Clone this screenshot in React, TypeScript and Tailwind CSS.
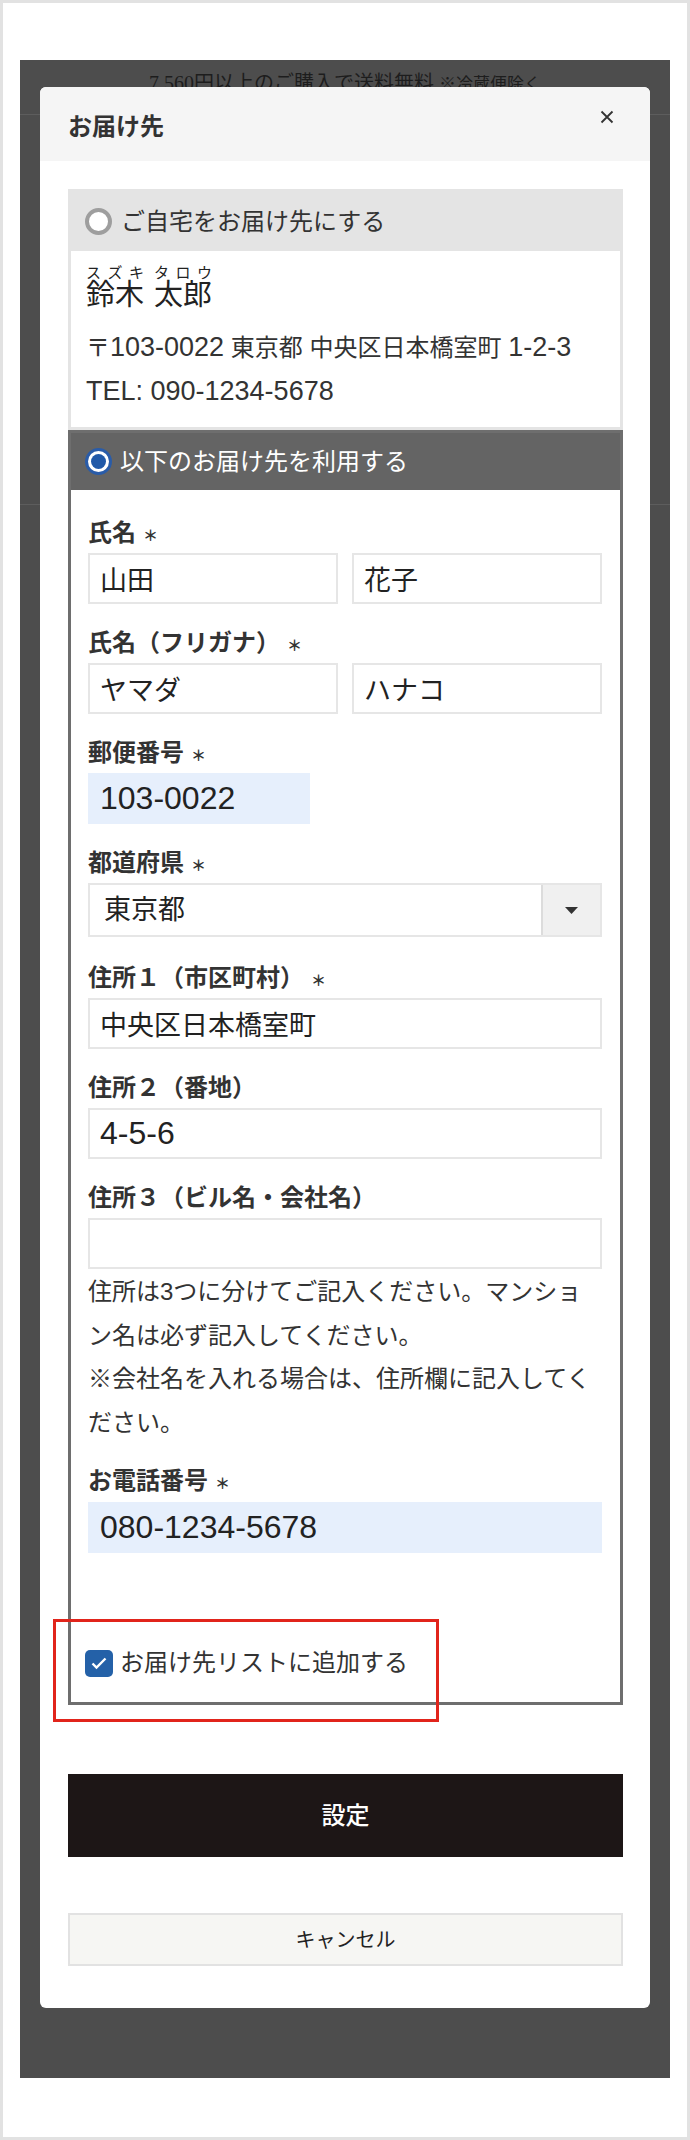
import type { ReactNode } from "react";

const FieldLabel = ({ children, required }: { children: ReactNode; required?: boolean }) => (
  <div className="h-[34px] text-[24px] leading-[34px] font-bold text-[#333]">
    {children}
    {required && <span className="ml-[7px] text-[15px]">＊</span>}
  </div>
);

const TextField = ({
  value = "",
  filled,
  digits,
}: {
  value?: string;
  filled?: boolean;
  digits?: boolean;
}) => (
  <input
    readOnly
    defaultValue={value}
    className={`block h-[51px] w-full border-2 px-[10px] text-[#222] outline-none ${
      filled ? "border-[#e6effc] bg-[#e6effc]" : "border-[#e6e6e6] bg-white"
    } ${digits ? "text-[32px]" : "text-[27px]"}`}
  />
);

const NameWord = ({ ruby, base }: { ruby: string; base: string }) => (
  <div className="flex flex-col">
    <div className="flex justify-between text-[15px] leading-[15px]">
      {ruby.split("").map((c, i) => (
        <span key={i}>{c}</span>
      ))}
    </div>
    <span className="text-[29px] leading-[30px]">{base}</span>
  </div>
);

const Latin = ({ children }: { children: ReactNode }) => (
  <span className="text-[27px] leading-[30px]">{children}</span>
);

export default function App() {
  return (
    <div className="h-[2140px] w-[690px] border-[3px] border-[#e2e2e2] bg-white px-[17px] pt-[57px] font-['Liberation_Sans','Noto_Sans_CJK_JP',sans-serif] text-[#333]">
      <div className="relative h-[2018px] bg-[#4d4d4d] px-[20px] pt-[27px]">
        {/* dimmed page behind the dialog */}
        <div className="absolute inset-x-0 top-0">
          <p className="pt-[11px] text-center leading-[24px] text-[#1d1d1d] font-['Liberation_Serif','Noto_Sans_CJK_JP',serif]">
            <span className="text-[20px]">7,560円以上のご購入で送料無料</span>
            <span className="ml-[5px] text-[17px]">※冷蔵便除く</span>
          </p>
          <div className="mt-[17px] h-px bg-[#5d5d5d]" />
          <div className="mt-[389px] h-px bg-[#5d5d5d]" />
        </div>

        <div className="relative rounded-[6px] bg-white">
          <div className="relative h-[74px] rounded-t-[6px] bg-[#f5f5f5] pl-[28px] pt-[25px]">
            <h2 className="text-[24px] leading-[30px] font-bold text-[#333]">お届け先</h2>
            <button type="button" className="absolute right-[36px] top-[23px]">
              <svg width="14" height="14" viewBox="0 0 14 14" className="block">
                <path d="M1.5 1.5l11 11M12.5 1.5l-11 11" stroke="#333" strokeWidth="1.8" />
              </svg>
            </button>
          </div>

          <div className="pb-[42px] pl-[28px] pr-[27px] pt-[28px]">
            {/* home address */}
            <div className="border-[3px] border-[#e4e4e4]">
              <div className="flex h-[59px] items-center gap-[9px] bg-[#e4e4e4] pl-[14px]">
                <span className="h-[27px] w-[27px] rounded-full border-[4px] border-[#9e9e9e] bg-white" />
                <span className="text-[24px] leading-[30px]">ご自宅をお届け先にする</span>
              </div>
              <div className="bg-white pb-[13px] pl-[15px] pt-[14px] text-[#222]">
                <div className="flex items-end gap-[10px]">
                  <NameWord ruby="スズキ" base="鈴木" />
                  <NameWord ruby="タロウ" base="太郎" />
                </div>
                <div className="mt-[16px] text-[24px] leading-[44px] text-[#333]">
                  <p className="h-[44px]">
                    〒<Latin>103-0022</Latin> 東京都 中央区日本橋室町 <Latin>1-2-3</Latin>
                  </p>
                  <p className="h-[44px]">
                    <Latin>TEL: 090-1234-5678</Latin>
                  </p>
                </div>
              </div>
            </div>

            {/* other address */}
            <div className="border-[3px] border-[#6e6e6e]">
              <div className="flex h-[57px] items-center gap-[8px] bg-[#646464] pl-[14px]">
                <span className="flex h-[27px] w-[27px] items-center justify-center rounded-full border-[3px] border-[#2a5ca8] bg-white">
                  <span className="h-[15px] w-[15px] rounded-full bg-[#2159a8]" />
                </span>
                <span className="text-[24px] leading-[30px] text-white">以下のお届け先を利用する</span>
              </div>

              <div className="bg-white pb-[19px] pl-[17px] pr-[18px] pt-[26px]">
                <FieldLabel required>氏名</FieldLabel>
                <div className="mt-[3px] grid grid-cols-2 gap-[14px]">
                  <TextField value="山田" />
                  <TextField value="花子" />
                </div>

                <div className="mt-[22px]">
                  <FieldLabel required>氏名（フリガナ）</FieldLabel>
                  <div className="mt-[3px] grid grid-cols-2 gap-[14px]">
                    <TextField value="ヤマダ" />
                    <TextField value="ハナコ" />
                  </div>
                </div>

                <div className="mt-[22px]">
                  <FieldLabel required>郵便番号</FieldLabel>
                  <div className="mt-[3px] w-[222px]">
                    <TextField value="103-0022" filled digits />
                  </div>
                </div>

                <div className="mt-[22px]">
                  <FieldLabel required>都道府県</FieldLabel>
                  <div className="mt-[3px] flex h-[54px] border-2 border-[#e6e6e6] bg-white">
                    <span className="flex-1 pl-[14px] text-[27px] leading-[50px] text-[#222]">東京都</span>
                    <span className="flex w-[59px] items-center justify-center border-l-2 border-[#dcdcdc] bg-[#f0f0f0]">
                      <svg width="13" height="7" viewBox="0 0 13 7" className="block">
                        <path d="M0 0h13L6.5 7z" fill="#333" />
                      </svg>
                    </span>
                  </div>
                </div>

                <div className="mt-[24px]">
                  <FieldLabel required>住所１（市区町村）</FieldLabel>
                  <div className="mt-[3px]">
                    <TextField value="中央区日本橋室町" />
                  </div>
                </div>

                <div className="mt-[22px]">
                  <FieldLabel>住所２（番地）</FieldLabel>
                  <div className="mt-[3px]">
                    <TextField value="4-5-6" digits />
                  </div>
                </div>

                <div className="mt-[22px]">
                  <FieldLabel>住所３（ビル名・会社名）</FieldLabel>
                  <div className="mt-[3px]">
                    <TextField />
                  </div>
                </div>

                <div className="mt-[1px] text-[24px] leading-[43.5px] text-[#333]">
                  <p>住所は3つに分けてご記入ください。マンション名は必ず記入してください。</p>
                  <p>※会社名を入れる場合は、住所欄に記入してください。</p>
                </div>

                <div className="mt-[20px]">
                  <FieldLabel required>お電話番号</FieldLabel>
                  <div className="mt-[4px]">
                    <TextField value="080-1234-5678" filled digits />
                  </div>
                </div>

                <div className="relative -ml-[3px] mt-[90px] flex h-[40px] items-center gap-[7px]">
                  <span className="flex h-[27px] w-[28px] items-center justify-center rounded-[5px] bg-[#2461a8]">
                    <svg width="18" height="14" viewBox="0 0 18 14" className="block">
                      <path d="M2.5 7.5l4 4L15.5 2.5" fill="none" stroke="#fff" strokeWidth="2.4" />
                    </svg>
                  </span>
                  <span className="text-[24px] leading-[30px]">お届け先リストに追加する</span>
                  <span className="pointer-events-none absolute left-[-32px] top-[-24px] h-[103px] w-[386px] border-[3px] border-[#e1241b]" />
                </div>
              </div>
            </div>

            <button
              type="button"
              className="mt-[69px] block h-[83px] w-full bg-[#1d1616] text-[24px] font-medium text-white"
            >
              設定
            </button>
            <button
              type="button"
              className="mt-[56px] block h-[53px] w-full border-2 border-[#e2e2e2] bg-[#f6f6f3] text-[20px] text-[#222]"
            >
              キャンセル
            </button>
          </div>
        </div>
      </div>
    </div>
  );
}
